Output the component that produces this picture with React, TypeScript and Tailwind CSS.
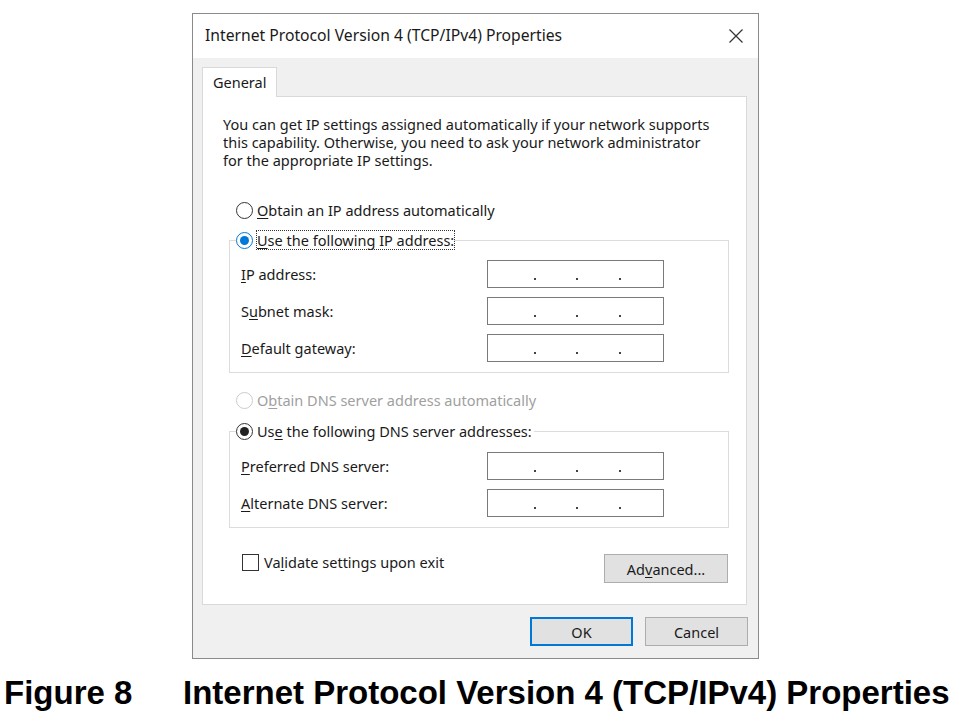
import React from 'react'

const ui = { fontFamily: '"Noto Sans", "Open Sans", sans-serif' }

function Dots() {
    return (
        <div className="relative w-[177px] h-[28px] bg-white border border-[#7a7a7a]">
            <span className="absolute left-[46px] top-[17px] w-[2px] h-[2px] bg-[#444]" />
            <span className="absolute left-[88px] top-[17px] w-[2px] h-[2px] bg-[#444]" />
            <span className="absolute left-[131px] top-[17px] w-[2px] h-[2px] bg-[#444]" />
        </div>
    )
}

function Radio({ state }: { state: 'off' | 'blue' | 'black' | 'disabled' }) {
    const ring =
        state === 'blue' ? 'border-[#0078d7]' :
            state === 'disabled' ? 'border-[#cccccc]' : 'border-[#333]'
    return (
        <span className={`w-[17px] h-[17px] rounded-full border bg-white flex items-center justify-center ${ring}`}>
            {state === 'blue' && <span className="w-[9px] h-[9px] rounded-full bg-[#0078d7]" />}
            {state === 'black' && <span className="w-[9px] h-[9px] rounded-full bg-[#222]" />}
        </span>
    )
}

function Field({ u, rest, pre = '' }: { u: string; rest: string; pre?: string }) {
    return (
        <div className="flex items-center justify-between h-[28px]">
            <span>
                {pre}<span className="underline underline-offset-2">{u}</span>{rest}
            </span>
            <Dots />
        </div>
    )
}

export default function App() {
    return (
        <div className="w-[959px] h-[717px] bg-white overflow-hidden text-[#1a1a1a]">
            <div className="pt-[13px] pl-[192px]">
                {/* dialog */}
                <div className="w-[567px] h-[646px] border border-[#8a8a8a] flex flex-col text-[14.5px] leading-[18px]" style={ui}>
                    <div className="h-[44px] bg-white flex items-center justify-between pl-[12px] pr-[14px] pb-[2px]">
                        <span className="text-[15.7px]">Internet Protocol Version 4 (TCP/IPv4) Properties</span>
                        <svg width="16" height="16" viewBox="0 0 16 16" className="mt-[2px]">
                            <path d="M1.5 1.5 L14.5 14.5 M14.5 1.5 L1.5 14.5" stroke="#333" strokeWidth="1.2" fill="none" />
                        </svg>
                    </div>
                    <div className="flex-1 bg-[#f0f0f0] pt-[9px] pl-[9px] pr-[11px] flex flex-col">
                        {/* tab */}
                        <div className="flex">
                            <div className="relative z-10 -mb-[1px] w-[75px] h-[30px] bg-white border border-b-0 border-[#d9d9d9] flex items-center pl-[10px] pb-[2px]">
                                General
                            </div>
                        </div>
                        <div className="h-[509px] bg-white border border-[#d9d9d9] pl-[20px] pr-[16px] pt-[18px]">
                            <p className="w-[492px]">
                                You can get IP settings assigned automatically if your network supports
                                this capability. Otherwise, you need to ask your network administrator
                                for the appropriate IP settings.
                            </p>

                            <div className="pl-[13px] mt-[32px] flex items-center gap-[4px] h-[18px]">
                                <Radio state="off" />
                                <span><span className="underline underline-offset-2">O</span>btain an IP address automatically</span>
                            </div>

                            <fieldset className="ml-[6px] w-[500px] mt-[12px] border border-[#dcdcdc] pl-[11px] pr-[64px] pb-[10px]">
                                <legend className="-ml-[5px] flex items-center gap-[4px] bg-white">
                                    <Radio state="blue" />
                                    <span className="outline outline-1 outline-dotted outline-[#333]">
                                        <span className="underline underline-offset-2">U</span>se the following IP address:
                                    </span>
                                </legend>
                                <div className="flex flex-col gap-[9px] mt-[11px]">
                                    <Field u="I" rest="P address:" />
                                    <Field pre="S" u="u" rest="bnet mask:" />
                                    <Field u="D" rest="efault gateway:" />
                                </div>
                            </fieldset>

                            <div className="pl-[13px] mt-[18px] flex items-center gap-[4px] h-[18px] text-[#a0a0a0]">
                                <Radio state="disabled" />
                                <span>O<span className="underline underline-offset-2">b</span>tain DNS server address automatically</span>
                            </div>

                            <fieldset className="ml-[6px] w-[500px] mt-[13px] border border-[#dcdcdc] pl-[11px] pr-[64px] pb-[10px]">
                                <legend className="-ml-[5px] flex items-center gap-[4px] bg-white pr-[2px]">
                                    <Radio state="black" />
                                    <span>Us<span className="underline underline-offset-2">e</span> the following DNS server addresses:</span>
                                </legend>
                                <div className="flex flex-col gap-[9px] mt-[12px]">
                                    <Field u="P" rest="referred DNS server:" />
                                    <Field u="A" rest="lternate DNS server:" />
                                </div>
                            </fieldset>

                            <div className="flex items-start justify-between mt-[25px] pl-[19px] pr-[2px]">
                                <div className="flex items-center gap-[5px]">
                                    <span className="w-[17px] h-[17px] border border-[#333] bg-white" />
                                    <span>Va<span className="underline underline-offset-2">l</span>idate settings upon exit</span>
                                </div>
                                <div className="mt-[1px] w-[124px] h-[29px] bg-[#e1e1e1] border border-[#adadad] flex items-center justify-center">
                                    <span>Ad<span className="underline underline-offset-2">v</span>anced...</span>
                                </div>
                            </div>
                        </div>

                        <div className="flex justify-end gap-[12px] mt-[12px] -mr-[1px]">
                            <div className="w-[103px] h-[29px] bg-[#e1e1e1] border-2 border-[#0078d7] flex items-center justify-center">OK</div>
                            <div className="w-[103px] h-[29px] bg-[#e1e1e1] border border-[#adadad] flex items-center justify-center">Cancel</div>
                        </div>
                    </div>
                </div>
            </div>

            {/* caption */}
            <div
                className="mt-[15px] pl-[4px] flex text-[33px] leading-[38px] font-bold text-black whitespace-nowrap"
                style={{ fontFamily: '"Liberation Sans", Arial, sans-serif' }}
            >
                <span className="w-[179px]">Figure 8</span>
                <span>Internet Protocol Version 4 (TCP/IPv4) Properties</span>
            </div>
        </div>
    )
}
